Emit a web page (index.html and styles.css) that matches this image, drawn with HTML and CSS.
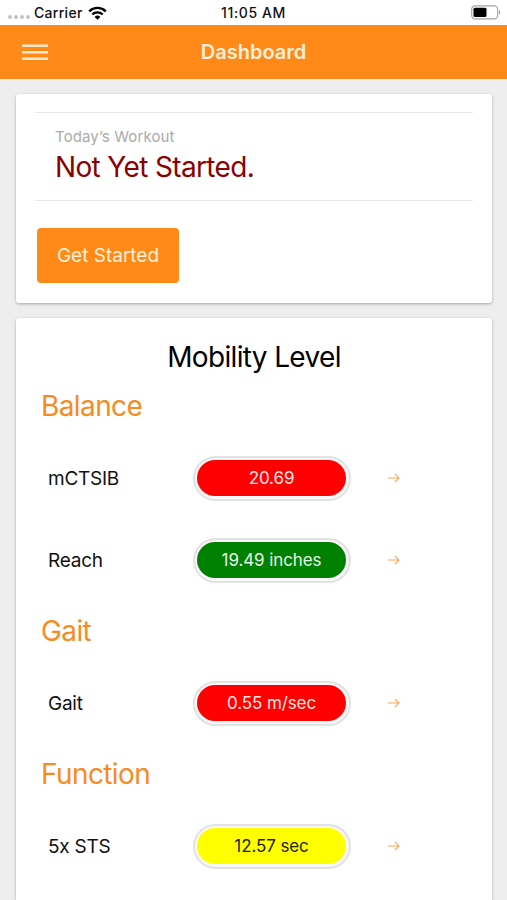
FILE: index.html
```html
<!DOCTYPE html>
<html lang="en">
<head>
  <meta charset="utf-8">
  <meta name="viewport" content="width=device-width, initial-scale=1">
  <title>Dashboard</title>
  <link rel="stylesheet" href="styles.css">
</head>
<body>
  <div class="status-bar">
    <div class="status-left">
      <span class="signal"><i></i><i></i><i></i><i></i></span>
      <span class="carrier">Carrier</span>
      <svg class="wifi" width="19" height="14" viewBox="0 0 19 14" fill="none" stroke="#000" stroke-width="2.4">
        <path d="M1.2 5.3a11.8 11.8 0 0 1 16.6 0"/>
        <path d="M4.3 8.5a7.4 7.4 0 0 1 10.4 0"/>
        <path d="M9.5 13.8L6.6 10.9a4.1 4.1 0 0 1 5.8 0z" fill="#000" stroke="none"/>
      </svg>
    </div>
    <span class="time">11:05 AM</span>
    <div class="status-right">
      <svg width="30" height="15" viewBox="0 0 30 15">
        <rect x="0.7" y="0.9" width="26" height="13" rx="3.6" fill="none" stroke="#a3a3a3" stroke-width="1.2"/>
        <rect x="2.5" y="2.7" width="13" height="9.4" rx="1.6"/>
        <path d="M28 5.2c1.8.8 1.8 3.6 0 4.4z" fill="#a3a3a3"/>
      </svg>
    </div>
  </div>

  <header class="navbar">
    <button class="menu" aria-label="Menu">
      <svg width="26" height="18" viewBox="0 0 26 18" stroke="#ffe8cc" stroke-width="2.4">
        <path d="M0 2.7h26M0 9.2h26M0 15.7h26"/>
      </svg>
    </button>
    <h1>Dashboard</h1>
  </header>

  <main>
    <section class="card workout">
      <div class="workout-status">
        <p class="label">Today’s Workout</p>
        <p class="state">Not Yet Started.</p>
      </div>
      <button class="start">Get Started</button>
    </section>

    <section class="card mobility">
      <h2>Mobility Level</h2>

      <h3>Balance</h3>
      <div class="row">
        <span class="name">mCTSIB</span>
        <span class="pill"><span class="value red">20.69</span></span>
        <svg class="arrow" viewBox="0 0 13 11"><path d="M1 5h11M7.8 0.8l4.2 4.2-4.2 4.2"/></svg>
      </div>
      <div class="row">
        <span class="name">Reach</span>
        <span class="pill"><span class="value green">19.49 inches</span></span>
        <svg class="arrow" viewBox="0 0 13 11"><path d="M1 5h11M7.8 0.8l4.2 4.2-4.2 4.2"/></svg>
      </div>

      <h3>Gait</h3>
      <div class="row">
        <span class="name">Gait</span>
        <span class="pill"><span class="value red">0.55 m/sec</span></span>
        <svg class="arrow" viewBox="0 0 13 11"><path d="M1 5h11M7.8 0.8l4.2 4.2-4.2 4.2"/></svg>
      </div>

      <h3>Function</h3>
      <div class="row">
        <span class="name">5x STS</span>
        <span class="pill"><span class="value yellow">12.57 sec</span></span>
        <svg class="arrow" viewBox="0 0 13 11"><path d="M1 5h11M7.8 0.8l4.2 4.2-4.2 4.2"/></svg>
      </div>
    </section>
  </main>
</body>
</html>
```

FILE: styles.css
```css
* {
  box-sizing: border-box;
}
body {
  margin: 0;
  height: 100vh;
  display: flex;
  flex-direction: column;
  background: #eee;
  color: #111;
  font-family: Inter, "Liberation Sans", sans-serif;
}
h1, h2, h3, p {
  margin: 0;
  font-weight: 400;
}
button {
  border: none;
  padding: 0;
  font-family: inherit;
  cursor: pointer;
}

/* status bar */
.status-bar {
  display: grid;
  grid-template-columns: 1fr auto 1fr;
  align-items: center;
  height: 25px;
  padding: 0 6px 0 8px;
  background: #fff;
}
.status-left {
  display: flex;
  align-items: center;
}
.signal {
  display: flex;
  gap: 2px;
  margin: 8px 4px 0 0;
}
.signal i {
  width: 4px;
  height: 4px;
  border-radius: 50%;
  background: #c4c4c4;
}
.carrier, .time {
  font-size: 14px;
  font-weight: 500;
  line-height: 25px;
  letter-spacing: 0.3px;
}
.time {
  letter-spacing: 0.6px;
  margin-right: 2px;
}
.wifi {
  margin-left: 5px;
}
.status-right {
  display: flex;
  justify-content: flex-end;
}

/* navbar */
.navbar {
  display: grid;
  grid-template-columns: 1fr auto 1fr;
  align-items: center;
  height: 54px;
  padding: 0 22px;
  background: #ff8a17;
}
.menu {
  display: flex;
  width: 26px;
  background: none;
}
.navbar h1 {
  color: #fff0dc;
  font-size: 20px;
  font-weight: 600;
}

/* cards */
main {
  flex: 1;
  display: flex;
  flex-direction: column;
  gap: 15px;
  padding: 15px 15px 0 16px;
}
.card {
  background: #fff;
  border-radius: 3px;
  box-shadow: 0 1px 3px rgba(0, 0, 0, 0.3);
}
.workout {
  height: 209px;
  padding: 18px 19px 0;
}
.workout-status {
  height: 89px;
  padding: 14px 20px 0;
  border-top: 1px solid #e8e8e8;
  border-bottom: 1px solid #e8e8e8;
}
.label {
  color: #aaa;
  font-size: 15px;
  line-height: 20px;
  letter-spacing: 0.12px;
}
.state {
  color: #8b0000;
  font-size: 28px;
  line-height: 40px;
  letter-spacing: -0.65px;
}
.start {
  width: 142px;
  height: 55px;
  margin: 27px 0 0 2px;
  border-radius: 4px;
  background: #ff8a17;
  color: #fff0d8;
  font-size: 19px;
}

/* mobility levels */
.mobility {
  flex: 1;
  padding: 20px 25px 0;
  border-radius: 3px 3px 0 0;
}
.mobility h2 {
  color: #000;
  font-size: 28px;
  line-height: 38px;
  letter-spacing: -0.65px;
  text-align: center;
}
.mobility h3 {
  color: #f78b1f;
  font-size: 28px;
  line-height: 61px;
  letter-spacing: -0.6px;
}
.row {
  display: grid;
  grid-template-columns: 145px 158px 49px;
  align-items: center;
  height: 82px;
  padding-left: 7px;
}
.name {
  font-size: 19px;
  letter-spacing: -0.25px;
}
.pill {
  height: 45px;
  padding: 2px 3px 2px 2px;
  border: 2px solid #e2e2e4;
  border-radius: 23px;
  background: #f8f8f8;
}
.value {
  display: block;
  height: 36px;
  border-radius: 18px;
  font-size: 17px;
  line-height: 36px;
  letter-spacing: -0.1px;
  text-align: center;
}
.red {
  background: #f00;
  color: #ffe6e6;
}
.green {
  background: #008000;
  color: #e4f6e4;
}
.yellow {
  background: #ff0;
  color: #221f00;
}
.arrow {
  justify-self: end;
  width: 13px;
  height: 11px;
  fill: none;
  stroke: #ffa64d;
  stroke-width: 1.1;
}
```
